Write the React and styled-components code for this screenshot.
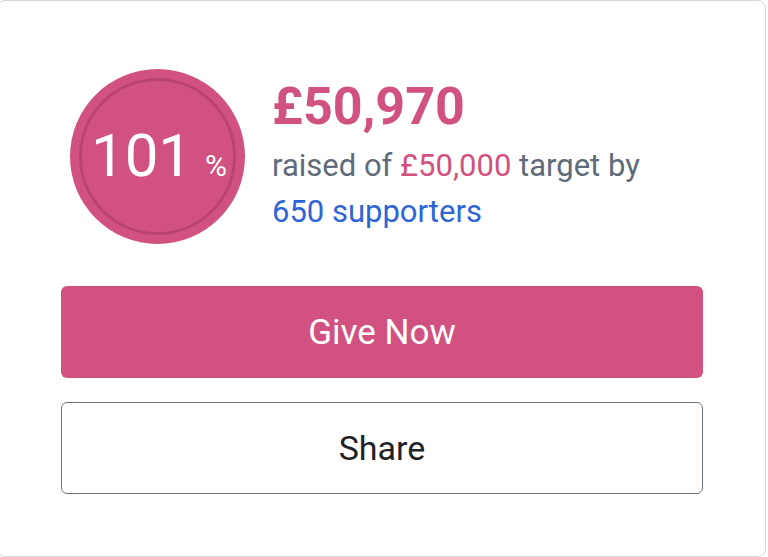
import styled, { createGlobalStyle } from 'styled-components';

const GlobalStyle = createGlobalStyle`
  html, body {
    margin: 0;
    padding: 0;
    background: #fff;
    font-family: Roboto, "Liberation Sans", sans-serif;
  }
`;

const Card = styled.div`
  box-sizing: border-box;
  width: 769px;
  height: 557px;
  margin-left: -3px;
  border: 1px solid #d6d6d6;
  border-radius: 8px;
  padding: 68px 63px 0 63px;
  background: #fff;
`;

const Summary = styled.div`
  display: flex;
  align-items: center;
  gap: 27px;
  margin-left: 9px;
`;

const Badge = styled.div`
  width: 175px;
  height: 175px;
  flex: none;
  border-radius: 50%;
  background: #d15281;
  display: flex;
  align-items: center;
  justify-content: center;
  position: relative;

  &::after {
    content: '';
    position: absolute;
    inset: 9px;
    border-radius: 50%;
    border: 3px solid #b9456f;
  }
`;

const Percent = styled.div`
  color: #fff;
  display: flex;
  align-items: baseline;
  gap: 13px;
  margin-left: 3px;
  margin-top: -2px;

  & > strong {
    font-weight: 400;
    font-size: 60px;
  }

  & > span {
    font-size: 30px;
  }
`;

const Stats = styled.div`
  display: flex;
  flex-direction: column;
`;

const Raised = styled.div`
  color: #d15281;
  font-weight: 700;
  font-size: 52px;
  line-height: 56px;
  margin-bottom: 8px;
`;

const Line = styled.div`
  color: #5f6b7b;
  font-size: 31px;
  line-height: 46px;
`;

const Pink = styled.span`
  color: #d15281;
`;

const Supporters = styled.a`
  color: #2f64d6;
  text-decoration: none;
`;

const Actions = styled.div`
  display: flex;
  flex-direction: column;
  gap: 24px;
  margin-top: 42px;
`;

const Button = styled.button`
  box-sizing: border-box;
  width: 642px;
  height: 92px;
  border-radius: 6px;
  font-family: Roboto, "Liberation Sans", sans-serif;
  font-size: ${p => (p.$primary ? '35px' : '34px')};
  cursor: pointer;
  background: ${p => (p.$primary ? '#d15281' : '#fff')};
  color: ${p => (p.$primary ? '#fff' : '#1f2328')};
  border: ${p => (p.$primary ? 'none' : '1.5px solid #6b7585')};
`;

export default function App() {
  return (
    <>
      <GlobalStyle />
      <Card>
        <Summary>
          <Badge>
            <Percent>
              <strong>101</strong>
              <span>%</span>
            </Percent>
          </Badge>
          <Stats>
            <Raised>£50,970</Raised>
            <Line>
              raised of <Pink>£50,000</Pink> target by
            </Line>
            <Line>
              <Supporters href="#">650 supporters</Supporters>
            </Line>
          </Stats>
        </Summary>
        <Actions>
          <Button $primary>Give Now</Button>
          <Button>Share</Button>
        </Actions>
      </Card>
    </>
  );
}
